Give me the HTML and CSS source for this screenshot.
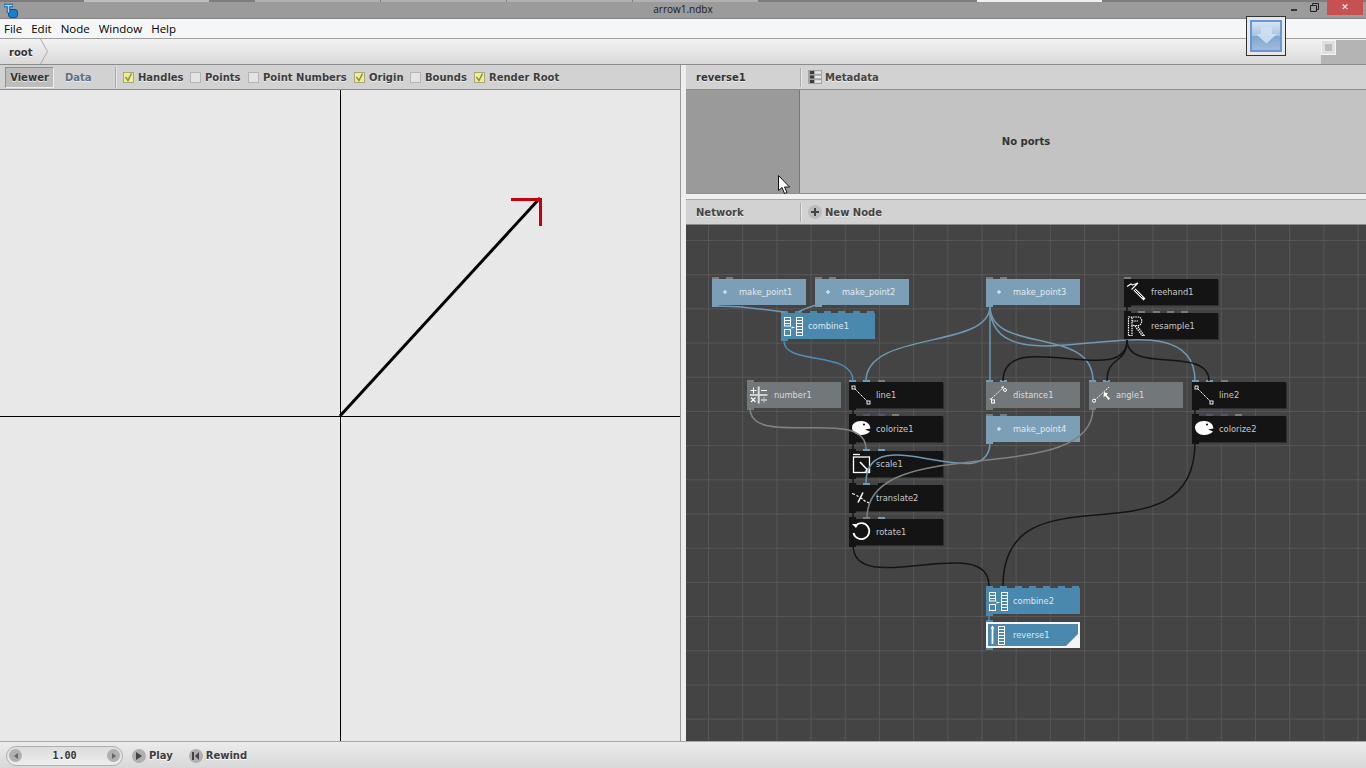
FILE: index.html
```html
<!DOCTYPE html>
<html lang="en">
<head>
<meta charset="utf-8">
<title>arrow1.ndbx</title>
<link rel="stylesheet" href="styles.css">
</head>
<body>
<svg class="defs" width="0" height="0" aria-hidden="true">
  <defs>
    <symbol id="i-point" viewBox="0 0 26 26"><circle cx="13" cy="13" r="1.2" fill="none" stroke="#fff"/></symbol>
    <symbol id="i-combine" viewBox="0 0 26 26"><g fill="none" stroke="#fff"><rect x="3.500" y="4.500" width="6" height="8.500"/><path d="M3.500 7.500h6M3.500 10.500h6"/><rect x="3.500" y="16.500" width="6" height="6"/><rect x="15.500" y="4.500" width="6" height="18"/><path d="M15.500 7.500h6M15.500 10.500h6M15.500 13.500h6M15.500 16.500h6M15.500 19.500h6"/><path d="M11 13.500v2M11 14.500h2.500"/></g></symbol>
    <symbol id="i-line" viewBox="0 0 26 26"><path d="M4.500 5.500L19.500 20.500" stroke="#fff" stroke-dasharray="1.500 .6" fill="none"/><rect x="3" y="4" width="3" height="3" fill="#141414" stroke="#fff" stroke-width=".9"/><rect x="18" y="19" width="3" height="3" fill="#141414" stroke="#fff" stroke-width=".9"/></symbol>
    <symbol id="i-number" viewBox="0 0 26 26"><g stroke="#fff" fill="none"><path d="M3 13h17.500" stroke-width="1.300"/><path d="M11.700 4.500v17" stroke-width="2" stroke="#ddd"/><path d="M3.500 8.500h6M6.500 5.500v6M14 8.500h6M4 15.500l4.500 4.500M8.500 15.500l-4.500 4.500M14 18h6M17 15.500v1M17 19.500v1" stroke-width="1.100"/></g></symbol>
    <symbol id="i-colorize" viewBox="0 0 26 26"><path d="M12 5C6 5 3 8 3 11.500 3 15.500 7 19 12 19c4 0 7-1.500 9-3.500l-5-2 5.500-1-1-3.500C18.500 6.500 16 5 12 5z" fill="#fff"/><circle cx="15" cy="8.500" r="1.100" fill="#141414"/></symbol>
    <symbol id="i-scale" viewBox="0 0 26 26"><g fill="none" stroke="#fff" stroke-width="1.300"><path d="M4 3.500h7"/><rect x="4.500" y="6" width="16" height="15.500"/><path d="M11 11l8.500 9" stroke-width="1.600"/></g><path d="M20.500 21.500l-5-1 4-4z" fill="#fff"/></symbol>
    <symbol id="i-translate" viewBox="0 0 26 26"><g stroke="#fff" fill="none"><path d="M3 8.500l3 1M7.500 10.500l2 1M11 12.500l2.500 1.500M14.500 15l2 1.500M18 17l2 1" stroke-width="1.200"/><path d="M14 7.500L9 17.500" stroke-width="1.600"/></g></symbol>
    <symbol id="i-rotate" viewBox="0 0 26 26"><path d="M6.500 6.500A8 8 0 1 1 4.500 14" fill="none" stroke="#fff" stroke-width="1.800"/><path d="M3 5h6.500l-2.500 4z" fill="#fff"/></symbol>
    <symbol id="i-distance" viewBox="0 0 26 26"><path d="M6 16L17 6" stroke="#fff" stroke-dasharray="1.500 1" fill="none"/><circle cx="19" cy="8" r="1.500" fill="none" stroke="#fff"/><rect x="5.500" y="18" width="3" height="3" fill="none" stroke="#fff"/><path d="M15 5l3-1-1 3zM3 17l3-1 0 2z" fill="#fff"/></symbol>
    <symbol id="i-angle" viewBox="0 0 26 26"><path d="M6 18L20 5" stroke="#fff" stroke-dasharray="1.500 1" fill="none"/><circle cx="5" cy="18.700" r="1.600" fill="none" stroke="#fff"/><path d="M15 10l-.5 5 2-1 3 4 1.500-1.500-3.500-3.500 1.500-1.500z" fill="#fff"/></symbol>
    <symbol id="i-freehand" viewBox="0 0 26 26"><g fill="none" stroke="#fff"><path d="M3 7.500L7 5l1.500 1L14 4 7.500 10.500" stroke-width="1.100"/><path d="M10.500 10.500l10 10" stroke-width="2.800"/><path d="M10.500 10.500l8 8" stroke="#141414" stroke-width="1"/></g></symbol>
    <symbol id="i-resample" viewBox="0 0 26 26"><g fill="none" stroke="#fff" stroke-dasharray="1.500 .8" stroke-width="1.200"><path d="M4.500 22.500V4H14c5 0 5 8 0 8.500H8V4M8 12.500v10h-3.500"/><path d="M11 13l7 9.500h2L13.500 13M8 8h6"/></g></symbol>
    <symbol id="i-reverse" viewBox="0 0 26 26"><g fill="none" stroke="#fff"><path d="M6.500 5v17" stroke-width="1.800"/><path d="M6.500 3.500l-2 3h4z" fill="#fff" stroke="none"/><rect x="12.500" y="4.500" width="6" height="18"/><path d="M12.500 7.500h6M12.500 10.500h6M12.500 13.500h6M12.500 16.500h6M12.500 19.500h6"/></g></symbol>
  </defs>
</svg>

<div class="app">
  <header class="titlebar">
    <div class="title-strip">
      <span class="strip a"></span><span class="strip b"></span><span class="strip a2"></span><span class="strip c"></span><span class="strip c"></span><span class="strip c"></span><span class="strip c"></span><span class="strip a3"></span><span class="strip d"></span><span class="strip e"></span>
    </div>
    <svg class="applogo" viewBox="0 0 15 16" width="15" height="16"><rect x="5.500" y="7.500" width="9" height="8" rx="2.500" fill="#1c7fd6" stroke="#0d4f92"/><path d="M1 3.500h9M5.500 3.500v7.500" stroke="#0f5fae" stroke-width="3.600" fill="none"/><path d="M1.500 3.500h8M5.500 3.500v7" stroke="#a9d8f7" stroke-width="1.500" fill="none"/></svg>
    <span class="title-text">arrow1.ndbx</span>
    <div class="winctl">
      <span class="min"></span>
      <svg class="restore" viewBox="0 0 9 9" width="9" height="9"><path d="M.5 2.500h6v6h-6zM2.500 2.500v-2h6v6h-2" fill="none" stroke="#222"/></svg>
      <span class="close">✕</span>
    </div>
  </header>

  <nav class="menubar">
    <span class="mi">File</span><span class="mi">Edit</span><span class="mi">Node</span><span class="mi">Window</span><span class="mi">Help</span>
  </nav>

  <div class="crumbbar">
    <span class="crumb">root</span>
    <svg class="chev" viewBox="0 0 8 25" width="8" height="25"><path d="M.5 0L7.500 12.500.5 25" fill="none" stroke="#aaa"/></svg>
    <div class="crumbtail"><span class="tailbtn"><span class="tailsq"></span></span></div>
  </div>

  <main class="panes">
    <section class="left">
      <div class="bar viewerbar">
        <span class="tab on">Viewer</span>
        <span class="tab data">Data</span>
        <span class="vsep"></span>
        <label class="chk c-handles"><span class="box yes"><svg viewBox="0 0 11 11" width="11" height="11"><path d="M2.500 5l2.500 3.500L8.500 1.500" fill="none" stroke="#8c8c5a" stroke-width="1.500"/></svg></span>Handles</label>
        <label class="chk c-points"><span class="box"></span>Points</label>
        <label class="chk c-numbers"><span class="box"></span>Point Numbers</label>
        <label class="chk c-origin"><span class="box yes"><svg viewBox="0 0 11 11" width="11" height="11"><path d="M2.500 5l2.500 3.500L8.500 1.500" fill="none" stroke="#8c8c5a" stroke-width="1.500"/></svg></span>Origin</label>
        <label class="chk c-bounds"><span class="box"></span>Bounds</label>
        <label class="chk c-root"><span class="box yes"><svg viewBox="0 0 11 11" width="11" height="11"><path d="M2.500 5l2.500 3.500L8.500 1.500" fill="none" stroke="#8c8c5a" stroke-width="1.500"/></svg></span>Render Root</label>
      </div>
      <div class="viewer">
        <svg class="scene" viewBox="0 90 680 651" preserveAspectRatio="none">
          <path d="M0 416.500H680M340.500 90V741" stroke="#000" fill="none"/>
          <path d="M340 416L540 198" stroke="#000" stroke-width="3" fill="none"/>
          <path d="M511 199.500H540.500V226" stroke="#c4000a" stroke-width="3" fill="none"/>
        </svg>
      </div>
    </section>
    <div class="vsplit"></div>
    <section class="right">
      <div class="bar portbar">
        <span class="head-name">reverse1</span>
        <span class="head-sep"></span>
        <svg class="meta-ic" viewBox="0 0 14 14" width="14" height="14"><rect width="14" height="14" fill="#a4a4a4"/><path d="M2 1h4v3H2zM2 5.500h4v3H2zM2 10h4v3H2z" fill="#3c3c3c"/><path d="M7 2.500h6M7 7h6M7 11.500h6" stroke="#e8e8e8" stroke-width="2.500"/></svg>
        <span class="head-label">Metadata</span>
      </div>
      <div class="ports">
        <div class="ports-l"></div>
        <div class="ports-r">No ports</div>
      </div>
      <div class="hsplit"></div>
      <div class="bar netbar">
        <span class="head-name plain">Network</span>
        <span class="head-sep"></span>
        <span class="plus"></span>
        <span class="head-label">New Node</span>
      </div>
      <div class="canvas">
        <div class="node pt n-mp1"><i class="p g"></i><i class="p g"></i><svg class="ic"><use href="#i-point"/></svg><span>make_point1</span><b class="out"></b></div>
        <div class="node pt n-mp2"><i class="p g"></i><i class="p g"></i><svg class="ic"><use href="#i-point"/></svg><span>make_point2</span><b class="out"></b></div>
        <div class="node pt n-mp3"><i class="p g"></i><i class="p g"></i><svg class="ic"><use href="#i-point"/></svg><span>make_point3</span><b class="out"></b></div>
        <div class="node bk n-free"><i class="p g"></i><svg class="ic"><use href="#i-freehand"/></svg><span>freehand1</span><b class="out"></b></div>
        <div class="node bk n-res"><i class="p k"></i><i class="p g"></i><i class="p g"></i><i class="p g"></i><i class="p g"></i><svg class="ic"><use href="#i-resample"/></svg><span>resample1</span><b class="out"></b></div>
        <div class="node cb n-com1"><i class="p b"></i><i class="p b"></i><i class="p b"></i><i class="p b"></i><i class="p b"></i><i class="p b"></i><i class="p b"></i><svg class="ic"><use href="#i-combine"/></svg><span>combine1</span><b class="out"></b></div>
        <div class="node gr n-num"><i class="p g"></i><svg class="ic"><use href="#i-number"/></svg><span>number1</span><b class="out"></b></div>
        <div class="node bk n-line1"><i class="p b"></i><i class="p b"></i><i class="p g"></i><svg class="ic"><use href="#i-line"/></svg><span>line1</span><b class="out"></b></div>
        <div class="node gr n-dist"><i class="p b"></i><i class="p b"></i><svg class="ic"><use href="#i-distance"/></svg><span>distance1</span><b class="out"></b></div>
        <div class="node gr n-ang"><i class="p b"></i><i class="p b"></i><svg class="ic"><use href="#i-angle"/></svg><span>angle1</span><b class="out"></b></div>
        <div class="node bk n-line2"><i class="p b"></i><i class="p b"></i><i class="p g"></i><svg class="ic"><use href="#i-line"/></svg><span>line2</span><b class="out"></b></div>
        <div class="node bk n-col1"><i class="p k"></i><i class="p v"></i><i class="p v"></i><i class="p g"></i><svg class="ic"><use href="#i-colorize"/></svg><span>colorize1</span><b class="out"></b></div>
        <div class="node pt n-mp4"><i class="p g"></i><i class="p g"></i><svg class="ic"><use href="#i-point"/></svg><span>make_point4</span><b class="out"></b></div>
        <div class="node bk n-col2"><i class="p k"></i><i class="p v"></i><i class="p v"></i><i class="p g"></i><svg class="ic"><use href="#i-colorize"/></svg><span>colorize2</span><b class="out"></b></div>
        <div class="node bk n-scale"><i class="p k"></i><i class="p b"></i><i class="p b"></i><svg class="ic"><use href="#i-scale"/></svg><span>scale1</span><b class="out"></b></div>
        <div class="node bk n-trans"><i class="p k"></i><i class="p b"></i><i class="p k"></i><svg class="ic"><use href="#i-translate"/></svg><span>translate2</span><b class="out"></b></div>
        <div class="node bk n-rot"><i class="p k"></i><i class="p g"></i><i class="p b"></i><svg class="ic"><use href="#i-rotate"/></svg><span>rotate1</span><b class="out"></b></div>
        <div class="node cb n-com2"><i class="p b"></i><i class="p b"></i><i class="p b"></i><i class="p b"></i><i class="p b"></i><i class="p b"></i><i class="p b"></i><svg class="ic"><use href="#i-combine"/></svg><span>combine2</span><b class="out"></b></div>
        <div class="node cb sel n-rev"><i class="p b"></i><svg class="ic"><use href="#i-reverse"/></svg><span>reverse1</span><b class="out"></b></div>
        <svg class="wires" viewBox="686 225 680 516">
          <g class="w-blue">
            <path d="M716 306C750 306 755 309 785 312"/>
            <path d="M818 305C810 306 805 309 798 312"/>
            <path d="M990 306C990 350 866 330 866 381"/>
            <path d="M990 306V381"/>
            <path d="M990 306C990 355 1093 325 1093 381"/>
            <path d="M990 306C990 400 1195 285 1195 381"/>
            <path d="M990 442C990 500 866 415 866 483"/>
          </g>
          <g class="w-deep">
            <path d="M784 341C784 366 853 350 853 381"/>
            <path d="M989 612V620"/>
          </g>
          <g class="w-dark">
            <path d="M1127 340C1127 390 1003 325 1003 381"/>
            <path d="M1127 340C1127 365 1107 355 1107 381"/>
            <path d="M1127 340C1127 375 1209 345 1209 381"/>
            <path d="M1127 305V312"/>
            <path d="M853 408V416M853 442V451M853 476V485M853 510V519M1195 408V416"/>
            <path d="M853 545C853 600 989 530 989 586"/>
            <path d="M1195 442C1195 570 1003 460 1003 586"/>
          </g>
          <g class="w-grey">
            <path d="M750 408C750 450 866 405 866 449"/>
            <path d="M1093 408C1093 490 867 430 867 518"/>
          </g>
        </svg>
      </div>
    </section>
  </main>

  <footer class="transport">
    <div class="pill">
      <span class="rnd"><em class="tri l"></em></span>
      <span class="val">1.00</span>
      <span class="rnd"><em class="tri r"></em></span>
    </div>
    <span class="rnd big play"><em class="tri r dk"></em></span><span class="tlabel">Play</span>
    <span class="rnd big rew"><em class="bar-l"></em><em class="tri l dk"></em></span><span class="tlabel">Rewind</span>
  </footer>

  <div class="dl-tile"><div class="dl-inner"><svg viewBox="0 0 24 18" width="24" height="18"><path d="M7 0h11v7h5l-10.500 9.500L2 7h5z" fill="#cfe0f2" opacity=".9"/></svg></div></div>
  <svg class="cursor" viewBox="0 0 13 20" width="13" height="20"><path d="M.5.500v15l3.500-3 2.500 6 2.500-1-2.500-5.500h5z" fill="#fff" stroke="#111"/></svg>
</div>
</body>
</html>
```
FILE: styles.css
```css
* { box-sizing: border-box; }
html, body { margin: 0; height: 100%; overflow: hidden; }
body { font-family: "DejaVu Sans", sans-serif; background: #eee; }
.defs { position: absolute; }
.app { position: relative; width: 1366px; height: 768px; display: flex; flex-direction: column; }

.titlebar { position: relative; height: 19px; flex: none; background: #9b9b9b; display: flex; align-items: center; justify-content: center; border-bottom: 1px solid #858585; }
.title-strip { position: absolute; left: 0; right: 0; top: 0; height: 2px; display: flex; }
.strip { display: block; height: 2px; flex: none; }
.strip.a { width: 84px; background: #7d7d7d; }
.strip.b { width: 125px; background: #bdbdbd; }
.strip.a2 { width: 46px; background: #7d7d7d; }
.strip.c { width: 126px; background: #b0b0b0; border-right: 1px solid #7d7d7d; }
.strip.a3 { width: 218px; background: #7d7d7d; }
.strip.d { width: 125px; background: #f0f0f0; }
.strip.e { flex: 1; background: #7d7d7d; }
.applogo { position: absolute; left: 3px; top: 2px; }
.title-text { font: 10px "Open Sans", sans-serif; color: #1a1a1a; }
.winctl { position: absolute; right: 3px; top: 0; height: 15px; display: flex; align-items: center; }
.min { width: 6px; height: 2px; background: #333; margin-right: 13px; margin-top: 4px; }
.restore { margin-right: 8px; margin-top: -1px; }
.close { width: 36px; height: 15px; background: #c75050; color: #fff; font: bold 9px/15px "DejaVu Sans", sans-serif; text-align: center; }

.menubar { height: 20px; flex: none; background: #f5f6f7; border-bottom: 1px solid #a0a0a0; display: flex; align-items: center; padding-left: 4px; gap: 9px; font: 11.500px "Open Sans", sans-serif; color: #000; }

.crumbbar { height: 26px; flex: none; display: flex; align-items: center; background: linear-gradient(#f2f2f2, #d9d9d9); border-bottom: 1px solid #8c8c8c; }
.crumb { padding: 1px 0 0 9px; width: 40px; font-weight: bold; font-size: 10px; color: #333; text-shadow: 0 1px 0 #fff; }
.crumbtail { margin-left: auto; width: 45px; height: 24px; background: #b4b4b4; align-self: flex-start; margin-top: 1px; position: relative; }
.tailbtn { position: absolute; left: 0; top: 0; width: 15px; height: 15px; background: #e0e0e0; border: 1px solid #f4f4f4; display: flex; align-items: center; justify-content: center; }
.tailsq { width: 7px; height: 7px; background: #bcbcbc; }

.panes { flex: 1; display: flex; min-height: 0; }
.left { width: 680px; display: flex; flex-direction: column; }
.vsplit { width: 6px; background: #eee; border-left: 1px solid #999; }
.right { flex: 1; display: flex; flex-direction: column; min-width: 0; }
.bar { height: 25px; flex: none; background: #d2d2d2; display: flex; align-items: center; border-bottom: 1px solid #8c8c8c; font-weight: bold; font-size: 10px; color: #3c3c3c; text-shadow: 0 1px 0 #eee; }

.viewerbar { padding-left: 5px; }
.tab { height: 21px; line-height: 19px; }
.tab.on { width: 49px; text-align: center; background: #bdbdbd; border: 1px solid #8f8f8f; border-right-color: #eee; border-bottom-color: #eee; color: #333; }
.tab.data { width: 60px; padding-left: 11px; line-height: 21px; color: #5f6f85; }
.vsep { width: 1px; height: 21px; background: #aaa; box-shadow: 1px 0 0 #e6e6e6; margin: 0 7px 0 1px; }
.chk { display: flex; align-items: center; gap: 4px; flex: none; }
.box { width: 11px; height: 11px; background: #e4e4e4; border: 1px solid #b5b5b5; display: block; position: relative; }
.box.yes { background: #efef8c; border-color: #a8a87c; }
.box svg { position: absolute; left: -1px; top: -1px; }
.c-handles { width: 67px; }
.c-points { width: 58px; }
.c-numbers { width: 106px; }
.c-origin { width: 56px; }
.c-bounds { width: 64px; }

.viewer { flex: 1; background: #e8e8e8; min-height: 0; position: relative; }
.scene { position: absolute; inset: 0; width: 100%; height: 100%; display: block; }

.head-name { width: 114px; padding-left: 10px; color: #333; }
.head-name.plain { color: #444; }
.head-sep { width: 1px; height: 19px; background: #aaa; box-shadow: 1px 0 0 #e6e6e6; }
.meta-ic { margin-left: 7px; }
.head-label { margin-left: 3px; color: #444; }
.plus { width: 14px; height: 14px; margin-left: 7px; border-radius: 50%; background: #bcbcbc; position: relative; }
.plus::before { content: ""; position: absolute; left: 3px; top: 6px; width: 8px; height: 2px; background: #444; }
.plus::after { content: ""; position: absolute; left: 6px; top: 3px; width: 2px; height: 8px; background: #444; }

.ports { height: 103px; flex: none; display: flex; }
.ports-l { width: 114px; background: #9a9a9a; border-right: 1px solid #777; }
.ports-r { flex: 1; background: #c3c3c3; display: flex; align-items: center; justify-content: center; padding-right: 114px; font-weight: bold; font-size: 10px; color: #333; }
.hsplit { height: 7px; flex: none; background: #f0f0f0; border-top: 1px solid #8f8f8f; border-bottom: 1px solid #a8a8a8; }

.canvas { flex: 1; position: relative; min-height: 0; overflow: hidden; background-color: #444; background-image: linear-gradient(90deg, #565656 1px, transparent 1px), linear-gradient(#565656 1px, transparent 1px); background-size: 34.200px 34.200px; background-position: 22px 15px; }
.wires { position: absolute; inset: 0; width: 100%; height: 100%; pointer-events: none; fill: none; }
.wires path { fill: none; stroke-width: 1.500; }
.w-blue path { stroke: #7099b3; }
.w-deep path { stroke: #4f8cb3; }
.w-dark path { stroke: #141414; }
.w-grey path { stroke: #7e8385; }

.node { position: absolute; width: 94px; height: 26px; display: flex; align-items: center; font-size: 8.300px; color: #d2d2d2; padding-left: 27px; }
.node.pt { background: #7a9fb6; color: #e4eaee; }
.node.bk { background: #141414; color: #c8c8c8; box-shadow: 1px 1px 0 #2f2f2f; }
.node.gr { background: #72777a; color: #dcdcdc; }
.node.cb { background: #4a88ae; color: #dfe9ef; }
.node.sel { outline: 2px solid #f4f4f4; outline-offset: -2px; }
.node.sel::after { content: ""; position: absolute; right: 2px; bottom: 2px; width: 0; height: 0; border-style: solid; border-width: 0 0 12px 12px; border-color: transparent transparent #f4f4f4 transparent; }
.ic { position: absolute; left: 0; top: 0; width: 26px; height: 26px; }
.p { position: absolute; left: 0; top: -2px; width: 7px; height: 2px; }
.p:nth-child(2) { left: 14px; }
.p:nth-child(3) { left: 29px; }
.p:nth-child(4) { left: 43px; }
.p:nth-child(5) { left: 57px; }
.p:nth-child(6) { left: 72px; }
.p:nth-child(7) { left: 86px; }
.p.g { background: #7b7b7b; }
.p.b { background: #6f9db8; }
.p.v { background: #5a536e; }
.p.k { background: #141414; }
.out { position: absolute; left: 0; bottom: -2px; width: 7px; height: 2px; background: inherit; }
.n-com1 .p.b, .n-com2 .p.b, .n-rev .p.b { background: #4a88ae; }

.n-mp1 { left: 26px; top: 54px; }
.n-mp2 { left: 129px; top: 54px; }
.n-mp3 { left: 300px; top: 54px; }
.n-free { left: 438px; top: 54px; }
.n-res { left: 438px; top: 88px; }
.n-com1 { left: 95px; top: 88px; }
.n-num { left: 61px; top: 157px; }
.n-line1 { left: 163px; top: 157px; }
.n-dist { left: 300px; top: 157px; }
.n-ang { left: 403px; top: 157px; }
.n-line2 { left: 506px; top: 157px; }
.n-col1 { left: 163px; top: 191px; }
.n-mp4 { left: 300px; top: 191px; }
.n-col2 { left: 506px; top: 191px; }
.n-scale { left: 163px; top: 226px; }
.n-trans { left: 163px; top: 260px; }
.n-rot { left: 163px; top: 294px; }
.n-com2 { left: 300px; top: 363px; }
.n-rev { left: 300px; top: 397px; }

.transport { height: 27px; flex: none; background: linear-gradient(#ececec, #d8d8d8); border-top: 1px solid #a8a8a8; display: flex; align-items: center; padding: 1px 0 0 6px; font-weight: bold; font-size: 10px; color: #3c3c3c; text-shadow: 0 1px 0 #fff; }
.pill { width: 117px; height: 20px; border: 1px solid #b0b0b0; border-radius: 10px; display: flex; align-items: center; justify-content: space-between; padding: 0 2px; background: linear-gradient(#dcdcdc, #ededed); }
.val { font: bold 10px "DejaVu Sans Mono", monospace; color: #333; }
.rnd { width: 13px; height: 13px; border-radius: 50%; background: #b0b0b0; display: flex; align-items: center; justify-content: center; position: relative; flex: none; }
.rnd.big { width: 14px; height: 14px; }
.play { margin-left: 9px; }
.rew { margin-left: 16px; }
.tlabel { margin-left: 3px; }
.tri { display: block; width: 0; height: 0; border-style: solid; border-color: transparent; }
.tri.l { border-width: 3.500px 4px 3.500px 0; border-right-color: #666; }
.tri.r { border-width: 3.500px 0 3.500px 4px; border-left-color: #666; }
.tri.r.dk { border-left-color: #444; border-width: 4px 0 4px 6px; }
.tri.l.dk { border-right-color: #444; border-width: 4px 4px 4px 0; }
.bar-l { display: block; width: 2px; height: 8px; background: #444; margin-right: 1px; }

.dl-tile { position: absolute; left: 1246px; top: 16px; width: 40px; height: 40px; border: 1px solid #333; background: #e8e8e8; padding: 3px; }
.dl-inner { width: 100%; height: 100%; border: 2px solid #6a97d4; background: linear-gradient(#d7e4f3 0, #a7c2e0 50%, #7fa6cf 50%, #a0bcdb 100%); display: flex; align-items: center; justify-content: center; }
.cursor { position: absolute; left: 778px; top: 175px; }
```
